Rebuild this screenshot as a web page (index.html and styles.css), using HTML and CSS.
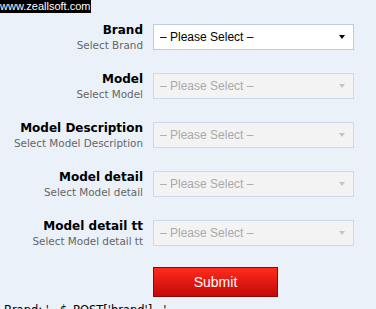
FILE: index.html
```html
<!DOCTYPE html>
<html lang="en">
<head>
    <meta charset="UTF-8">
    <meta name="viewport" content="width=device-width, initial-scale=1.0">
    <title>Dependent Select</title>
    <link rel="stylesheet" href="styles.css">
</head>
<body>
    <div class="site-tag">www.zeallsoft.com</div>

    <form class="select-form" method="post">
        <div class="field-row">
            <div class="field-label">
                <strong>Brand</strong>
                <span>Select Brand</span>
            </div>
            <div class="select-wrap">
                <select name="brand">
                    <option>&ndash; Please Select &ndash;</option>
                </select>
            </div>
        </div>

        <div class="field-row">
            <div class="field-label">
                <strong>Model</strong>
                <span>Select Model</span>
            </div>
            <div class="select-wrap disabled">
                <select name="model" disabled>
                    <option>&ndash; Please Select &ndash;</option>
                </select>
            </div>
        </div>

        <div class="field-row">
            <div class="field-label">
                <strong>Model Description</strong>
                <span>Select Model Description</span>
            </div>
            <div class="select-wrap disabled">
                <select name="description" disabled>
                    <option>&ndash; Please Select &ndash;</option>
                </select>
            </div>
        </div>

        <div class="field-row">
            <div class="field-label">
                <strong>Model detail</strong>
                <span>Select Model detail</span>
            </div>
            <div class="select-wrap disabled">
                <select name="detail" disabled>
                    <option>&ndash; Please Select &ndash;</option>
                </select>
            </div>
        </div>

        <div class="field-row">
            <div class="field-label">
                <strong>Model detail tt</strong>
                <span>Select Model detail tt</span>
            </div>
            <div class="select-wrap disabled">
                <select name="detail_tt" disabled>
                    <option>&ndash; Please Select &ndash;</option>
                </select>
            </div>
        </div>

        <div class="form-actions">
            <button type="submit" class="submit-button">Submit</button>
        </div>
    </form>

    <p class="debug-line">Brand: ' . $_POST['brand'] . '</p>
</body>
</html>
```

FILE: styles.css
```css
:root {
    --page-bg: #eaf1f8;
    --border-color: #b7cde0;
    --border-disabled: #c9dae8;
    --text-dark: #000;
    --text-muted: #666;
    --text-disabled: #aaa;
}

body {
    margin: 0;
    background-color: var(--page-bg);
    font-family: "DejaVu Sans", Verdana, sans-serif;
    color: var(--text-dark);
}

.site-tag {
    width: fit-content;
    background-color: #000;
    color: #fff;
    font-family: "Liberation Sans", Arial, sans-serif;
    font-size: 11px;
    line-height: 13px;
    padding-right: 1px;
}

.select-form {
    display: flex;
    flex-direction: column;
    gap: 23px;
    padding-top: 11px;
}

.field-row {
    display: flex;
    align-items: flex-start;
    gap: 10px;
    height: 26px;
}

.field-label {
    width: 143px;
    text-align: right;
    display: flex;
    flex-direction: column;
    margin-top: -1px;
}

.field-label strong {
    font-size: 12px;
    line-height: 15px;
    font-weight: bold;
}

.field-label span {
    font-size: 10.4px;
    line-height: 14px;
    color: var(--text-muted);
}

.select-wrap {
    position: relative;
    width: 201px;
    height: 26px;
}

.select-wrap select {
    appearance: none;
    -webkit-appearance: none;
    width: 100%;
    height: 100%;
    box-sizing: border-box;
    margin: 0;
    padding: 0 20px 0 6px;
    border: 1px solid var(--border-color);
    border-radius: 0;
    background-color: #fff;
    color: var(--text-dark);
    font-family: "Liberation Sans", Arial, sans-serif;
    font-size: 12px;
}

.select-wrap::after {
    content: "";
    position: absolute;
    right: 9px;
    top: 11px;
    border-left: 3.5px solid transparent;
    border-right: 3.5px solid transparent;
    border-top: 4px solid #000;
    pointer-events: none;
}

.select-wrap.disabled select {
    background-color: #f3f3f3;
    border-color: var(--border-disabled);
    color: var(--text-disabled);
    opacity: 1;
}

.select-wrap.disabled::after {
    border-top-color: #c4c4c4;
}

.form-actions {
    margin-top: -2px;
    padding-left: 153px;
}

.submit-button {
    width: 125px;
    height: 30px;
    box-sizing: border-box;
    border: 1px solid #8e0606;
    background: linear-gradient(#ff2b1c, #c40808);
    color: #fff;
    font-family: "Liberation Sans", Arial, sans-serif;
    font-size: 14px;
    cursor: pointer;
    padding: 0;
}

.debug-line {
    margin: 6px 0 0 4px;
    font-size: 11.5px;
    line-height: 14px;
    white-space: nowrap;
}
```
